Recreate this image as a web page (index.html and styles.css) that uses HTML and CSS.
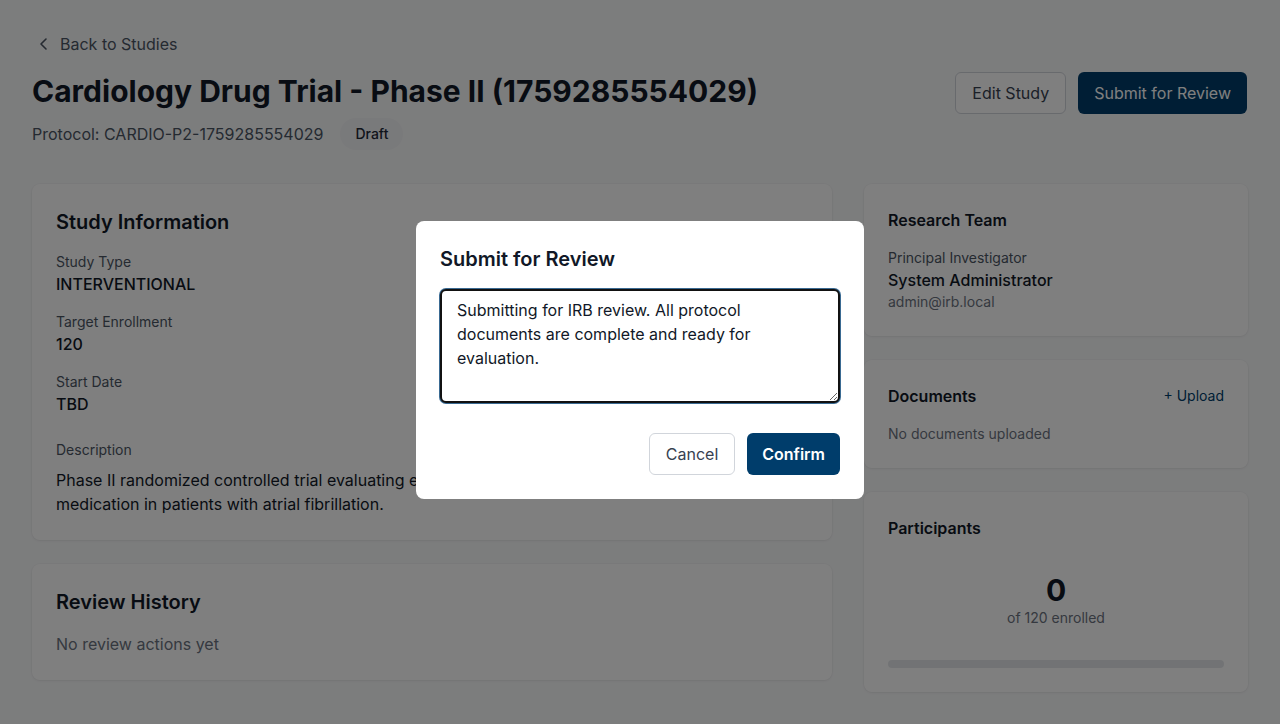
FILE: index.html
```html
<!DOCTYPE html>
<html lang="en">
<head>
<meta charset="utf-8">
<title>Study Detail</title>
<link rel="stylesheet" href="styles.css">
</head>
<body>
<div class="page">
  <a class="back" href="#">
    <svg class="chev" width="16" height="16" viewBox="0 0 16 16" fill="none"><path d="M10 3 5 8l5 5" stroke="currentColor" stroke-width="1.6" stroke-linecap="round" stroke-linejoin="round"/></svg>
    <span>Back to Studies</span>
  </a>
  <div class="header">
    <div class="title-block">
      <h1 class="title">Cardiology Drug Trial - Phase II (1759285554029)</h1>
      <div class="meta">
        <span class="protocol">Protocol: CARDIO-P2-1759285554029</span>
        <span class="badge">Draft</span>
      </div>
    </div>
    <div class="actions">
      <button class="btn btn-outline">Edit Study</button>
      <button class="btn btn-primary btn-submit">Submit for Review</button>
    </div>
  </div>

  <div class="grid">
    <div class="col-main">
      <section class="card">
        <h2 class="card-title-lg">Study Information</h2>
        <div class="field">
          <div class="label">Study Type</div>
          <div class="value">INTERVENTIONAL</div>
        </div>
        <div class="field">
          <div class="label">Target Enrollment</div>
          <div class="value">120</div>
        </div>
        <div class="field">
          <div class="label">Start Date</div>
          <div class="value">TBD</div>
        </div>
        <div class="field desc">
          <div class="label">Description</div>
          <p class="desc-text">Phase II randomized controlled trial evaluating efficacy and safety of a novel anticoagulant medication in patients with atrial fibrillation.</p>
        </div>
      </section>
      <section class="card">
        <h2 class="card-title-lg">Review History</h2>
        <p class="muted">No review actions yet</p>
      </section>
    </div>
    <div class="col-side">
      <section class="card">
        <h3 class="card-title">Research Team</h3>
        <div class="small-label">Principal Investigator</div>
        <div class="value">System Administrator</div>
        <div class="small-muted">admin@irb.local</div>
      </section>
      <section class="card">
        <div class="card-head">
          <h3 class="card-title">Documents</h3>
          <a class="upload" href="#">+ Upload</a>
        </div>
        <div class="small-muted">No documents uploaded</div>
      </section>
      <section class="card">
        <h3 class="card-title">Participants</h3>
        <div class="count-box">
          <div class="count">0</div>
          <div class="small-muted">of 120 enrolled</div>
        </div>
        <div class="bar"><div class="bar-fill" style="width:0%"></div></div>
      </section>
    </div>
  </div>
</div>

<div class="overlay">
  <div class="modal">
    <h3 class="modal-title">Submit for Review</h3>
    <textarea class="textarea" rows="4">Submitting for IRB review. All protocol documents are complete and ready for evaluation.</textarea>
    <div class="modal-actions">
      <button class="btn btn-outline btn-cancel">Cancel</button>
      <button class="btn btn-primary btn-confirm">Confirm</button>
    </div>
  </div>
</div>
</body>
</html>
```

FILE: styles.css
```css
* { box-sizing: border-box; }
html, body { margin: 0; padding: 0; }
body {
  font-family: Inter, "Noto Sans", "Liberation Sans", sans-serif;
  background: #f9fafb;
  color: #111827;
  height: 724px;
  overflow: hidden;
}
.page { padding: 32px 32px 32px; }

.back {
  display: inline-flex;
  align-items: center;
  gap: 8px;
  color: #4b5563;
  text-decoration: none;
  font-size: 16px;
  line-height: 24px;
  padding-left: 4px;
}
.chev { display: block; }

.header {
  display: flex;
  justify-content: space-between;
  align-items: flex-start;
  margin-top: 16px;
  margin-bottom: 34px;
}
.title {
  margin: 1px 0 0;
  font-size: 30px;
  line-height: 36px;
  font-weight: 700;
  color: #111827;
}
.meta {
  display: flex;
  align-items: center;
  gap: 17px;
  margin-top: 9px;
}
.protocol { font-size: 16px; line-height: 24px; color: #4b5563; }
.badge {
  background: #f3f4f6;
  color: #1f2937;
  font-size: 14px;
  font-weight: 500;
  line-height: 20px;
  padding: 6px 15px;
  border-radius: 9999px;
}
.actions { display: flex; gap: 12px; padding-right: 1px; }

.btn {
  font-family: inherit;
  font-size: 16px;
  line-height: 24px;
  padding: 8px 16px;
  border-radius: 6px;
  border: 1px solid transparent;
  cursor: pointer;
}
.btn-outline { background: #fff; border-color: #d1d5db; color: #374151; }
.btn-primary { background: #003d6b; color: #fff; font-weight: 400; }
.btn-submit { padding: 8px 15px; }

.grid {
  display: grid;
  grid-template-columns: repeat(3, 1fr);
  gap: 32px;
}
.col-main { grid-column: span 2; }
.col-main, .col-side { display: flex; flex-direction: column; gap: 24px; }
.card {
  background: #fff;
  border-radius: 8px;
  box-shadow: 0 1px 3px rgba(0,0,0,0.06), 0 0 0 1px rgba(0,0,0,0.02);
  padding: 24px;
}
.card-title-lg {
  margin: 0 0 16px;
  font-size: 20px;
  line-height: 28px;
  font-weight: 600;
}
.card-title {
  margin: 0 0 16px;
  font-size: 16px;
  line-height: 24px;
  font-weight: 600;
}
.field + .field { margin-top: 16px; }
.field.desc { margin-top: 24px; }
.label { font-size: 14px; line-height: 20px; color: #4b5563; }
.value { font-size: 16px; line-height: 24px; font-weight: 500; color: #111827; }
.desc-text { margin: 8px 0 0; font-size: 16px; line-height: 24px; color: #111827; }
.muted { margin: 0; font-size: 16px; line-height: 24px; color: #6b7280; }
.small-label { font-size: 14px; line-height: 20px; color: #4b5563; }
.small-muted { font-size: 14px; line-height: 20px; color: #6b7280; }

.card-head { display: flex; justify-content: space-between; align-items: center; margin-bottom: 16px; }
.card-head .card-title { margin: 0; }
.upload { font-size: 14px; line-height: 20px; color: #003d6b; text-decoration: none; }

.count-box { text-align: center; padding: 16px 0; }
.count { font-size: 30px; line-height: 36px; font-weight: 700; }
.bar { height: 8px; background: #e5e7eb; border-radius: 9999px; margin-top: 16px; overflow: hidden; }
.bar-fill { height: 100%; background: #003d6b; }

.overlay {
  position: fixed;
  inset: 0;
  background: rgba(0,0,0,0.5);
  display: flex;
  align-items: center;
  justify-content: center;
}
.modal {
  width: 448px;
  background: #fff;
  border-radius: 8px;
  padding: 24px;
  margin-bottom: 4px;
}
.modal-title {
  margin: 0 0 16px;
  font-size: 20px;
  line-height: 28px;
  font-weight: 600;
  color: #111827;
}
.textarea {
  display: block;
  width: 100%;
  font-family: inherit;
  font-size: 16px;
  line-height: 24px;
  color: #111827;
  padding: 7px 15px;
  border: 2px solid #111;
  border-radius: 6px;
  box-shadow: 0 0 0 1px #3a6a92;
  outline: none;
  height: 114px;
  resize: vertical;
}
.modal-actions {
  display: flex;
  justify-content: flex-end;
  gap: 12px;
  margin-top: 30px;
}
.btn-confirm { font-weight: 600; padding: 8px 14px; }
```
